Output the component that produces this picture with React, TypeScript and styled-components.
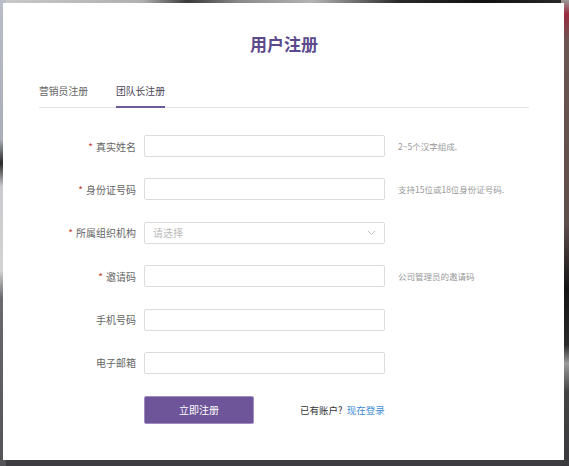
import React, { useState } from 'react'
import styled, { createGlobalStyle } from 'styled-components'

type Field = {
    id: string
    label: string
    required: boolean
    hint?: string
    select?: boolean
}

const fields: Field[] = [
    { id: 'name', label: '真实姓名', required: true, hint: '2~5个汉字组成.' },
    { id: 'idcard', label: '身份证号码', required: true, hint: '支持15位或18位身份证号码.' },
    { id: 'org', label: '所属组织机构', required: true, select: true },
    { id: 'invite', label: '邀请码', required: true, hint: '公司管理员的邀请码' },
    { id: 'phone', label: '手机号码', required: false },
    { id: 'email', label: '电子邮箱', required: false }
]

const tabs = ['营销员注册', '团队长注册']

function App() {
    const [active, setActive] = useState(1)

    return (
        <>
            <GlobalStyle />
            <Page>
                <Card>
                    <Title>用户注册</Title>
                    <TabBar>
                        {tabs.map((t, i) => (
                            <Tab key={t} $active={i === active} onClick={() => setActive(i)}>
                                {t}
                            </Tab>
                        ))}
                    </TabBar>
                    <Form>
                        {fields.map((f) => (
                            <Row key={f.id}>
                                <Label htmlFor={f.id}>
                                    {f.required && <Star>*</Star>}
                                    {f.label}
                                </Label>
                                {f.select ? (
                                    <SelectBox id={f.id}>
                                        <Placeholder>请选择</Placeholder>
                                        <svg width="9" height="6" viewBox="0 0 9 6">
                                            <path d="M1 1l3.5 3.5L8 1" fill="none" stroke="#bbb" strokeWidth="0.9" />
                                        </svg>
                                    </SelectBox>
                                ) : (
                                    <Input id={f.id} />
                                )}
                                <Hint>{f.hint}</Hint>
                            </Row>
                        ))}
                        <Actions>
                            <Submit>立即注册</Submit>
                            <LoginText>
                                已有账户? <LoginLink href="#">现在登录</LoginLink>
                            </LoginText>
                        </Actions>
                    </Form>
                </Card>
            </Page>
        </>
    )
}

export default App

const GlobalStyle = createGlobalStyle`
    html, body {
        margin: 0;
        padding: 0;
    }
    body {
        font-family: "Noto Sans CJK SC", "Noto Sans", "Liberation Sans", sans-serif;
        background:
            linear-gradient(to bottom, #b9bdc6 0%, #a9adb4 30%, #2a2a2c 35%, #c9cacd 40%, #d3d3d5 58%, #6a6a6e 64%, #545458 100%) left top / 6px 100% no-repeat,
            linear-gradient(to bottom, #9a9a9a 0%, #9b2c3e 3%, #6a5553 9%, #5e4e4c 48%, #141414 62%, #2a2a2a 74%, #9a9a9a 78%, #444 84%, #3a3a3e 100%) right top / 8px 100% no-repeat,
            linear-gradient(to right, #c9c9cb 0%, #b0b0b2 25%, #3a3a3a 33%, #8a8a8a 42%, #b4b4b4 55%, #2a2a2a 70%, #111 85%, #2a2a2a 100%) left top / 100% 4px no-repeat,
            #3d3d41;
    }
`

const Page = styled.div`
    padding: 3px 5px 6px 3px;
`

const Card = styled.div`
    width: 561px;
    height: 457px;
    box-sizing: border-box;
    background: #fff;
    padding: 29px 35px 0 36px;
`

const Title = styled.h1`
    margin: 0;
    text-align: center;
    font-size: 17px;
    line-height: 24px;
    font-weight: 700;
    color: #5c4a8c;
`

const TabBar = styled.div`
    display: flex;
    gap: 28px;
    margin-top: 28px;
    border-bottom: 1px solid #e2e2e6;
`

const Tab = styled.div<{ $active: boolean }>`
    font-size: 9.8px;
    line-height: 14px;
    padding-bottom: 8px;
    color: ${(p) => (p.$active ? '#4a4458' : '#666')};
    border-bottom: 2px solid ${(p) => (p.$active ? '#6e5a96' : 'transparent')};
    margin-bottom: -1px;
    cursor: pointer;
`

const Form = styled.div`
    display: flex;
    flex-direction: column;
    gap: 21.4px;
    margin-top: 27px;
`

const Row = styled.div`
    display: grid;
    grid-template-columns: 97px 241px 1fr;
    column-gap: 8px;
    align-items: center;
    height: 22px;
`

const Label = styled.label`
    text-align: right;
    font-size: 10px;
    color: #666;
    white-space: nowrap;
`

const Star = styled.span`
    color: #c0392b;
    margin-right: 3px;
`

const Input = styled.input`
    box-sizing: border-box;
    height: 22px;
    width: 100%;
    border: 1px solid #dcdcdc;
    border-radius: 2px;
    padding: 0 8px;
    font-family: inherit;
    font-size: 10px;
    outline: none;
`

const SelectBox = styled.div`
    box-sizing: border-box;
    height: 22px;
    border: 1px solid #dcdcdc;
    border-radius: 2px;
    padding: 0 8px 0 8px;
    display: flex;
    align-items: center;
    justify-content: space-between;
`

const Placeholder = styled.span`
    font-size: 10px;
    color: #bbb;
`

const Hint = styled.span`
    font-size: 8.5px;
    color: #999;
    padding-left: 5px;
    white-space: nowrap;
`

const Actions = styled.div`
    display: flex;
    align-items: center;
    padding-left: 105px;
    margin-top: 0.6px;
    gap: 46px;
`

const Submit = styled.button`
    width: 110px;
    height: 28px;
    border: 1px solid #a08cc4;
    border-radius: 2px;
    background: #6e5499;
    color: #fff;
    font-family: inherit;
    font-size: 10px;
    cursor: pointer;
`

const LoginText = styled.span`
    font-size: 9.5px;
    color: #333;
`

const LoginLink = styled.a`
    color: #3d8bd2;
    text-decoration: none;
    margin-left: 2px;
`
